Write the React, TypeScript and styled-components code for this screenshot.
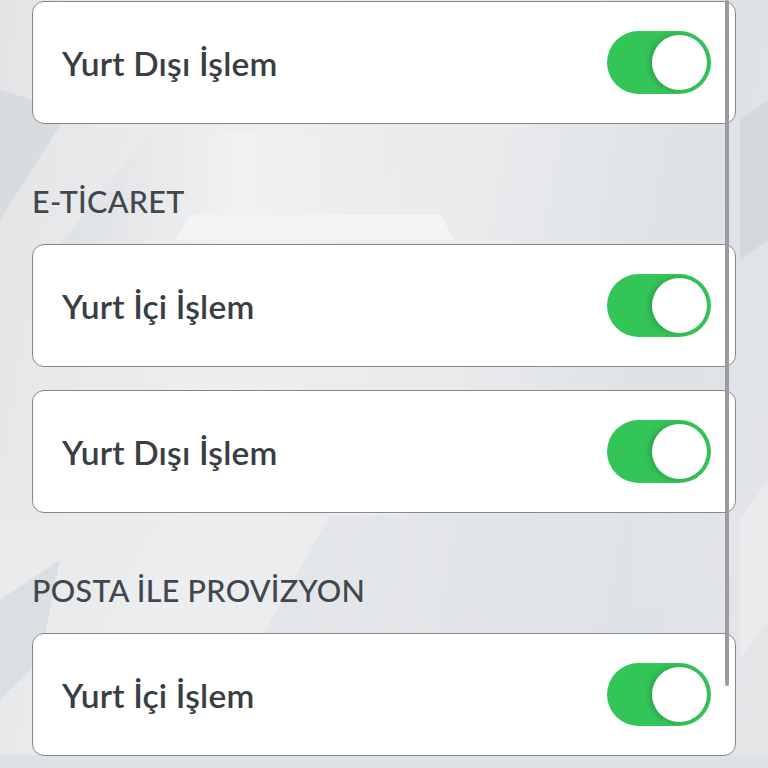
import React from "react";
import styled, { createGlobalStyle } from "styled-components";

const GlobalStyle = createGlobalStyle`
  html, body {
    margin: 0;
    padding: 0;
    width: 768px;
    height: 768px;
    overflow: hidden;
    background: #e4e6e8;
  }
  * { box-sizing: border-box; }
`;

const Screen = styled.div`
  position: relative;
  width: 768px;
  height: 768px;
  overflow: hidden;
  font-family: Lato, "Open Sans", sans-serif;
  background: linear-gradient(
    100deg,
    #e2e4e6 0%,
    #eceef0 30%,
    #e9ebed 55%,
    #dfe2e5 80%,
    #e4e6e8 100%
  );
`;

const Backdrop = styled.svg`
  position: absolute;
  inset: 0;
  width: 768px;
  height: 768px;
`;

const List = styled.div`
  position: relative;
  display: flex;
  flex-direction: column;
  padding: 1px 32px 0 32px;
`;

const Section = styled.div`
  display: flex;
  flex-direction: column;
  gap: 23px;
`;

const SectionTitle = styled.div`
  padding: 58px 0 24px;
  font-size: 30.5px;
  line-height: 38px;
  font-weight: 500;
  color: #41474d;
  letter-spacing: 0.3px;
`;

const Card = styled.div`
  height: 123px;
  display: flex;
  align-items: center;
  justify-content: space-between;
  padding: 0 24px 0 29px;
  background: #ffffff;
  border: 1.5px solid #85888c;
  border-radius: 12px;
`;

const Label = styled.span`
  font-size: 33.5px;
  font-weight: 600;
  color: #383e44;
  letter-spacing: 0.2px;
`;

const Switch = styled.div<{ $on: boolean }>`
  position: relative;
  width: 104px;
  height: 63px;
  border-radius: 32px;
  background: ${(p) => (p.$on ? "#34c559" : "#e5e5ea")};
  flex-shrink: 0;
`;

const Knob = styled.div<{ $on: boolean }>`
  position: absolute;
  top: 4px;
  left: ${(p) => (p.$on ? "45px" : "4px")};
  width: 55px;
  height: 55px;
  border-radius: 50%;
  background: #ffffff;
  box-shadow: -3px 0 6px rgba(0, 0, 0, 0.18);
`;

const ScrollIndicator = styled.div`
  position: absolute;
  top: 0;
  left: 725px;
  width: 4px;
  height: 686px;
  border-radius: 2px;
  background: #9a9c9f;
`;

type Row = { label: string; on: boolean };

function ToggleRow({ label, on }: Row) {
  return (
    <Card>
      <Label>{label}</Label>
      <Switch $on={on}>
        <Knob $on={on} />
      </Switch>
    </Card>
  );
}

const sections: { title?: string; rows: Row[] }[] = [
  { rows: [{ label: "Yurt Dışı İşlem", on: true }] },
  {
    title: "E-TİCARET",
    rows: [
      { label: "Yurt İçi İşlem", on: true },
      { label: "Yurt Dışı İşlem", on: true },
    ],
  },
  {
    title: "POSTA İLE PROVİZYON",
    rows: [{ label: "Yurt İçi İşlem", on: true }],
  },
];

export default function App() {
  return (
    <Screen>
      <GlobalStyle />
      <Backdrop viewBox="0 0 768 768">
        <defs>
          <linearGradient id="g1" x1="0" y1="0" x2="1" y2="0">
            <stop offset="0" stopColor="#dcdfe2" />
            <stop offset="1" stopColor="#e6e8ea" />
          </linearGradient>
          <linearGradient id="g2" x1="0" y1="0" x2="1" y2="0">
            <stop offset="0" stopColor="#dcdfe2" />
            <stop offset="0.5" stopColor="#f1f2f3" />
            <stop offset="1" stopColor="#e8eaec" />
          </linearGradient>
        </defs>
        <polygon points="0,90 70,110 0,220" fill="#d9dcdf" />
        <polygon points="150,130 420,130 330,245 60,245" fill="url(#g2)" opacity="0.8" />
        <polygon points="190,215 440,215 455,240 175,240" fill="#f3f4f5" />
        <polygon points="740,120 768,100 768,240 740,260" fill="#d6d9dc" />
        <polygon points="0,520 160,520 90,640 0,700" fill="#e9ebed" />
        <polygon points="0,600 60,560 40,660 0,700" fill="#dcdfe2" />
        <polygon points="330,515 900,515 560,640 260,640" fill="url(#g1)" opacity="0.5" />
        <polygon points="740,520 768,480 768,620 740,660" fill="#e9ebed" />
        <polygon points="0,755 768,755 768,768 0,768" fill="#dfe2e5" />
      </Backdrop>
      <List>
        {sections.map((s, i) => (
          <React.Fragment key={i}>
            {s.title && <SectionTitle>{s.title}</SectionTitle>}
            <Section>
              {s.rows.map((r, j) => (
                <ToggleRow key={j} label={r.label} on={r.on} />
              ))}
            </Section>
          </React.Fragment>
        ))}
      </List>
      <ScrollIndicator />
    </Screen>
  );
}
